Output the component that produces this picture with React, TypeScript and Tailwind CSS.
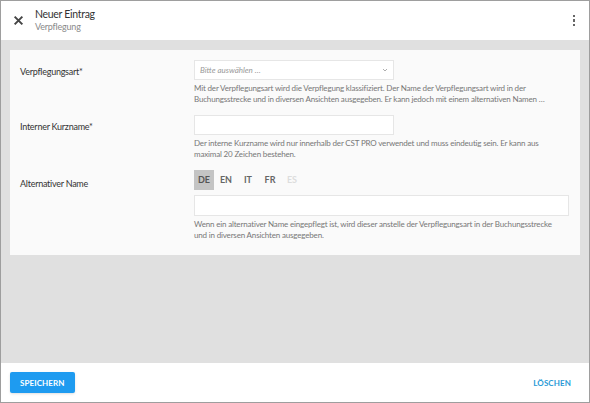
import React from "react";

const font = { fontFamily: "Lato, 'Open Sans', sans-serif" };

function Field({
  label,
  children,
  help,
}: {
  label: string;
  children: React.ReactNode;
  help: string;
}) {
  return (
    <div className="flex">
      <div className="w-[174px] shrink-0 pt-[5px] text-[9px] tracking-[-0.25px] text-[#333]">{label}</div>
      <div className="flex-1">
        {children}
        <p className="mt-[3px] pr-[10px] text-[8px] leading-[11px] tracking-[-0.17px] text-[#777]">{help}</p>
      </div>
    </div>
  );
}

export default function App() {
  const langs = ["DE", "EN", "IT", "FR", "ES"];
  return (
    <div style={font} className="flex h-[403px] w-[590px] flex-col border border-[#9e9e9e] bg-[#e0e0e0]">
      <header className="flex h-[39px] items-center bg-white pl-[12px] pr-[14px]">
        <svg width="11" height="11" viewBox="0 0 10 10" className="mr-[11px]">
          <path d="M1.5 1.5 L8.5 8.5 M8.5 1.5 L1.5 8.5" stroke="#444" strokeWidth="1.8" />
        </svg>
        <div className="flex-1">
          <div className="text-[10.5px] leading-[13px] tracking-[-0.3px] text-[#333]">Neuer Eintrag</div>
          <div className="text-[9px] leading-[12px] tracking-[-0.2px] text-[#8a8a8a]">Verpflegung</div>
        </div>
        <div className="flex flex-col gap-[2px]">
          <span className="h-[2.5px] w-[2.5px] bg-[#666]" />
          <span className="h-[2.5px] w-[2.5px] bg-[#666]" />
          <span className="h-[2.5px] w-[2.5px] bg-[#666]" />
        </div>
      </header>

      <main className="flex-1 px-[9px] pt-[10px]">
        <section className="flex flex-col gap-[10px] bg-[#fafafa] pb-[14px] pl-[10px] pr-[10px] pt-[10px]">
          <Field
            label="Verpflegungsart*"
            help="Mit der Verpflegungsart wird die Verpflegung klassifiziert. Der Name der Verpflegungsart wird in der Buchungsstrecke und in diversen Ansichten ausgegeben. Er kann jedoch mit einem alternativen Namen …"
          >
            <div className="flex h-[20px] w-[200px] items-center justify-between border border-[#e6e6e6] bg-white px-[5px]">
              <span className="text-[8px] italic text-[#999]">Bitte auswählen …</span>
              <svg width="6" height="4" viewBox="0 0 6 4">
                <path d="M1 1 L3 3 L5 1" stroke="#999" strokeWidth="0.8" fill="none" />
              </svg>
            </div>
          </Field>

          <Field
            label="Interner Kurzname*"
            help="Der interne Kurzname wird nur innerhalb der CST PRO verwendet und muss eindeutig sein. Er kann aus maximal 20 Zeichen bestehen."
          >
            <div className="h-[20px] w-[200px] border border-[#e6e6e6] bg-white" />
          </Field>

          <div className="flex">
            <div className="w-[174px] shrink-0 pt-[7px] text-[9px] tracking-[-0.25px] text-[#333]">Alternativer Name</div>
            <div className="flex-1">
              <div className="flex items-center gap-[2px]">
                {langs.map((l, i) => (
                  <span
                    key={l}
                    className={
                      i === 0
                        ? "flex h-[20px] w-[20px] items-center justify-center bg-[#c4c4c4] text-[9px] font-bold text-[#555]"
                        : i === 4
                        ? "flex h-[20px] w-[20px] items-center justify-center text-[9px] font-bold text-[#ddd]"
                        : "flex h-[20px] w-[20px] items-center justify-center text-[9px] font-bold text-[#666]"
                    }
                  >
                    {l}
                  </span>
                ))}
              </div>
              <div className="mt-[5px] h-[21px] w-[375px] border border-[#e6e6e6] bg-white" />
              <p className="mt-[3px] pr-[10px] text-[8px] leading-[11px] tracking-[-0.17px] text-[#777]">
                Wenn ein alternativer Name eingepflegt ist, wird dieser anstelle der Verpflegungsart in der Buchungsstrecke und in diversen Ansichten ausgegeben.
              </p>
            </div>
          </div>
        </section>
      </main>

      <footer className="flex h-[39px] items-center justify-between bg-white pl-[9px] pr-[18px]">
        <button className="h-[21px] rounded-[2px] bg-[#1e9bf0] px-[10px] text-[8px] font-bold tracking-[0.1px] text-white shadow-sm">
          SPEICHERN
        </button>
        <button className="text-[8px] font-bold tracking-[0.1px] text-[#2a9ad6]">LÖSCHEN</button>
      </footer>
    </div>
  );
}
